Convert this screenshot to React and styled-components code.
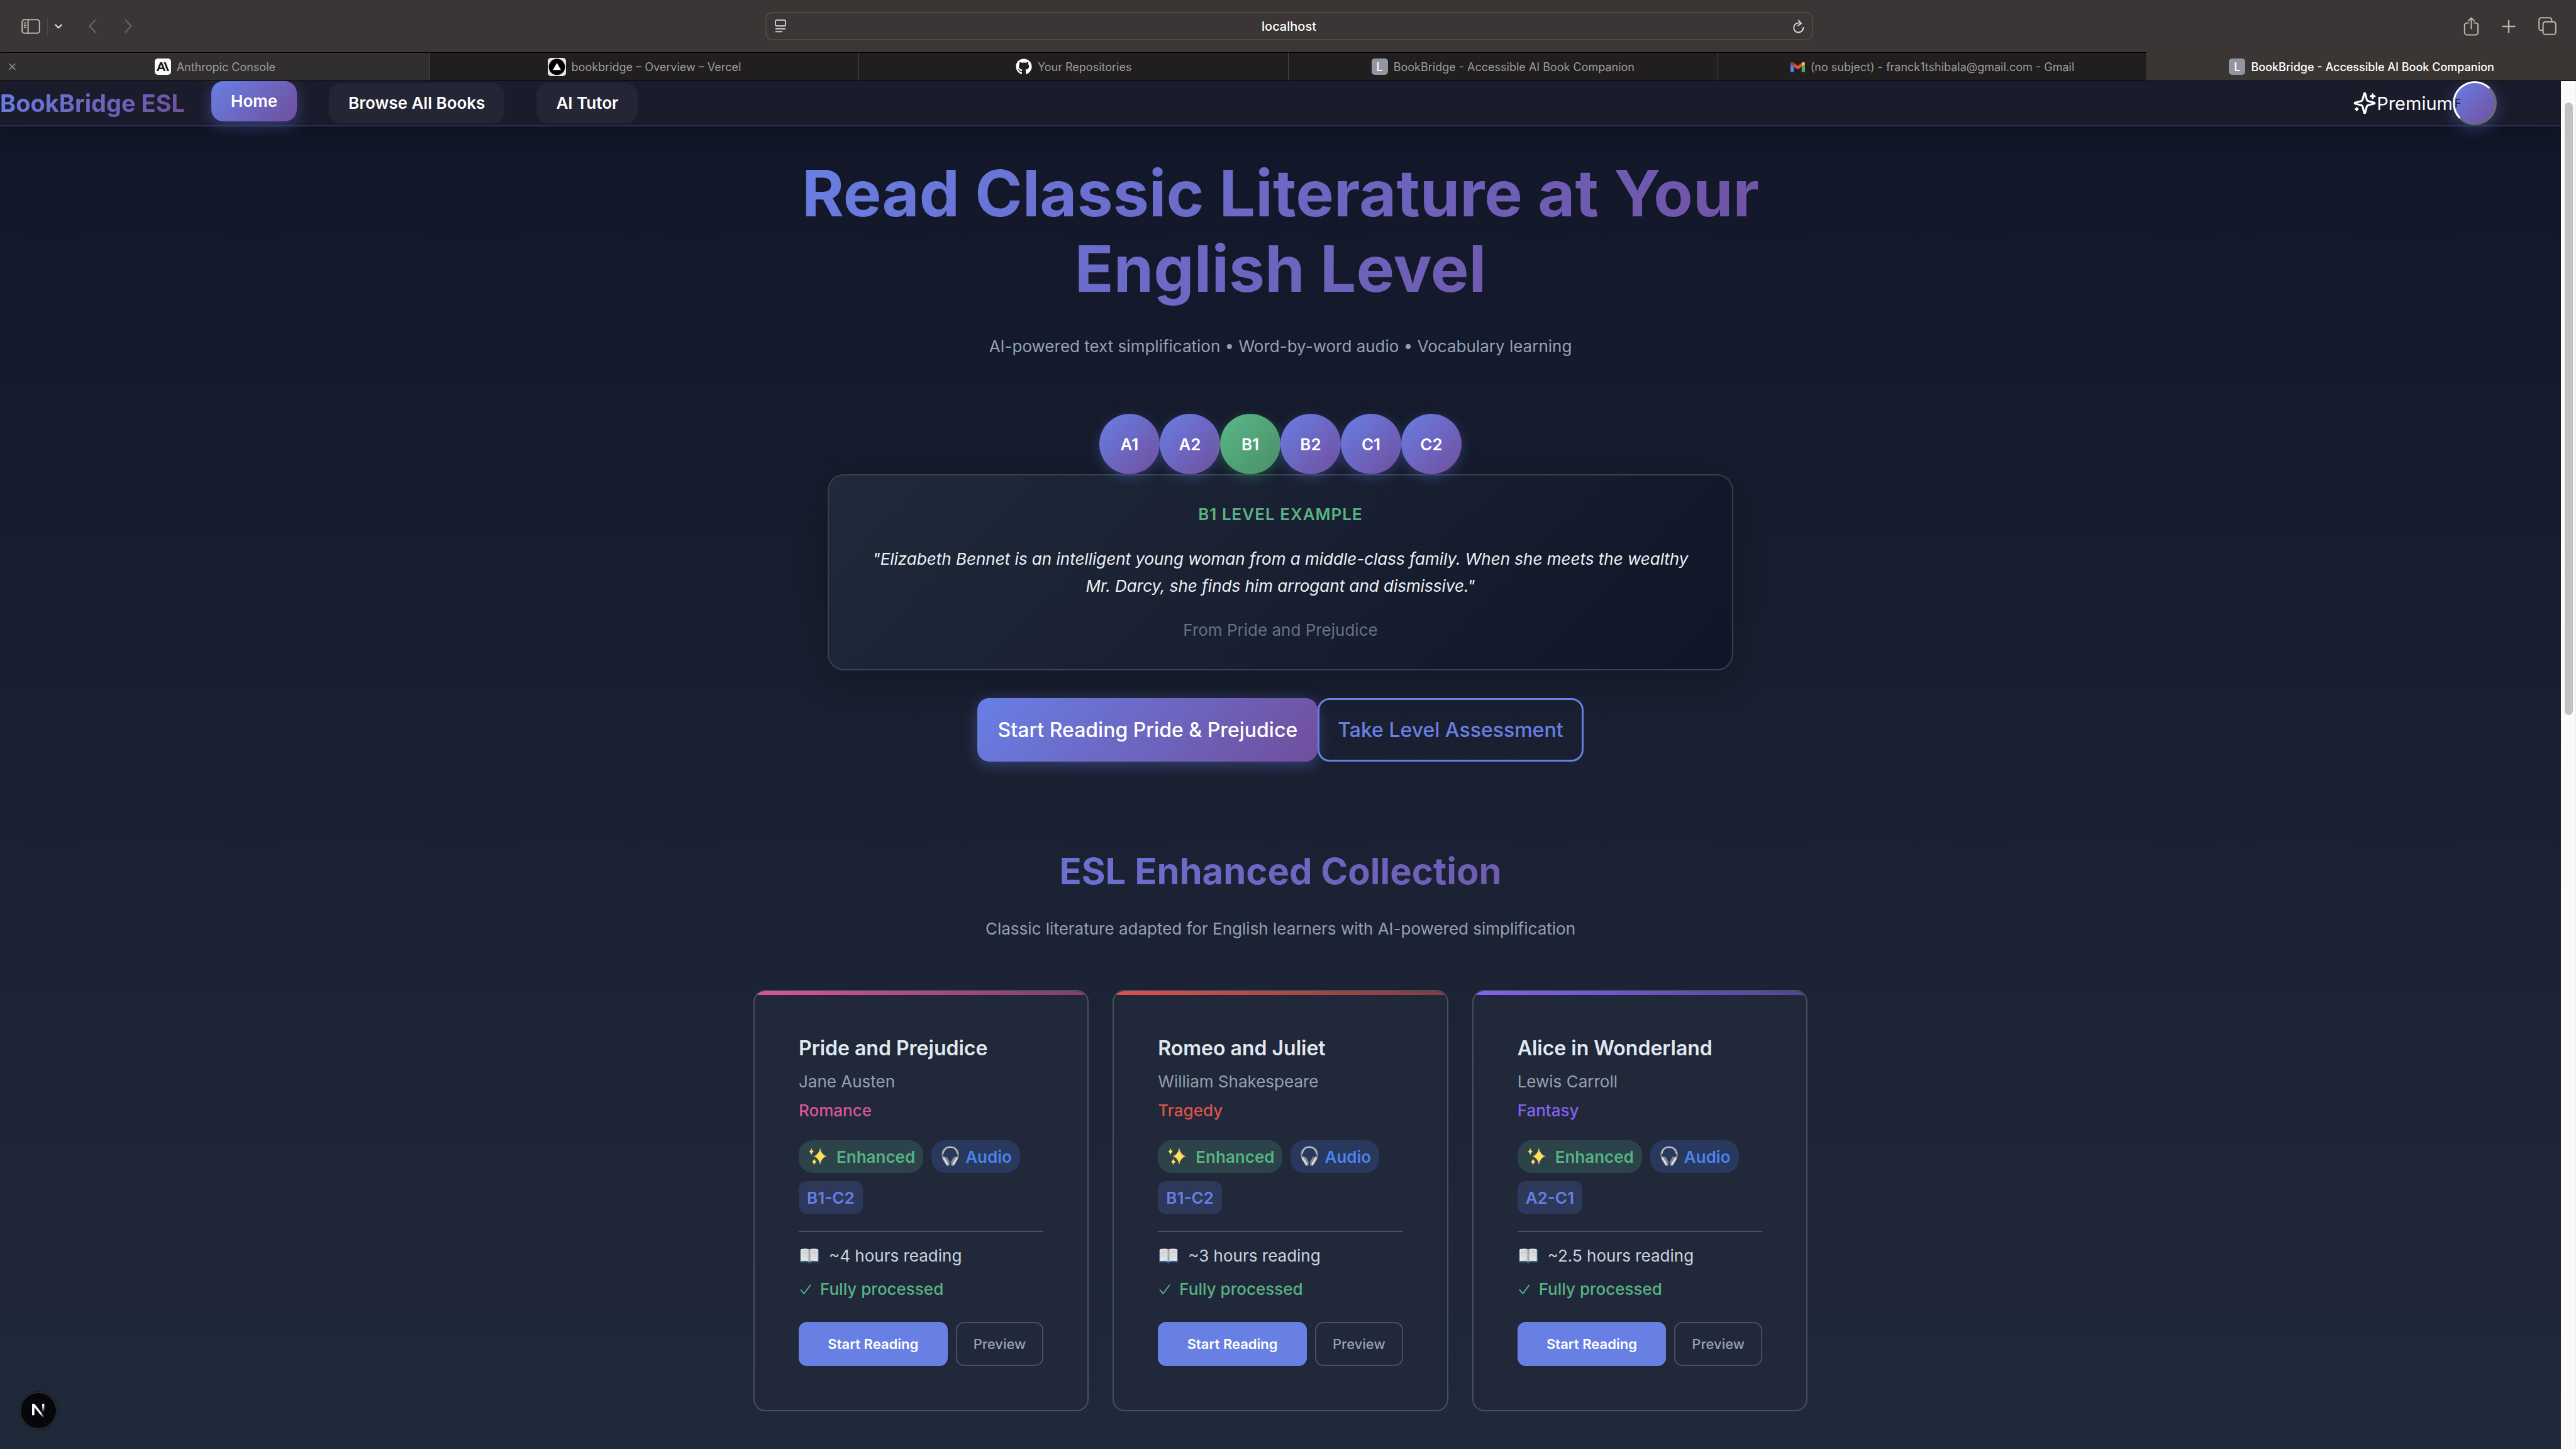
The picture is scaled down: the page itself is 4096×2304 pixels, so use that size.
import React, { useState } from 'react';
import styled, { createGlobalStyle, css } from 'styled-components';
import { FaGithub } from 'react-icons/fa';
import { SiAnthropic } from 'react-icons/si';

const brandGradient = 'linear-gradient(135deg, #687fe5 0%, #714e9d 100%)';

const GlobalStyle = createGlobalStyle`
  *, *::before, *::after { box-sizing: border-box; }
  body {
    margin: 0;
    font-family: Inter, 'Liberation Sans', sans-serif;
    font-size: 26px;
    color: #e2e8f0;
    background: #111628;
  }
  h1, h2, h3, p, ul { margin: 0; padding: 0; }
  ul { list-style: none; }
  button, input { font-family: inherit; margin: 0; }
  button { cursor: pointer; }
  svg { display: block; flex: none; }
`;

const gradientText = css`
  background: ${brandGradient};
  -webkit-background-clip: text;
  background-clip: text;
  color: transparent;
`;

/* ---------- Browser window ---------- */

const Window = styled.div`
  display: flex;
  flex-direction: column;
  height: 100vh;
  overflow: hidden;
`;

const Toolbar = styled.header`
  display: grid;
  grid-template-columns: 1fr 1666px 1fr;
  align-items: center;
  padding: 19px 31px 19px 34px;
  background: #3b3635;
`;

const ToolGroup = styled.div`
  display: flex;
  align-items: center;
  gap: ${(p) => p.$gap}px;
  justify-content: ${(p) => (p.$end ? 'flex-end' : 'flex-start')};
`;

const IconButton = styled.button`
  display: flex;
  padding: 0;
  border: 0;
  background: none;
  color: ${(p) => p.$color || '#b8b2b1'};
`;

const ToolDivider = styled.span`
  width: 1px;
  height: 28px;
  background: #4e4948;
`;

const AddressBar = styled.form`
  display: flex;
  align-items: center;
  height: 45px;
  padding: 0 11px 0 13px;
  border: 2px solid #4d4947;
  border-radius: 11px;
`;

const AddressInput = styled.input`
  flex: 1;
  min-width: 0;
  padding: 0;
  border: 0;
  outline: 0;
  background: none;
  color: #fff;
  font-size: 20px;
  font-weight: 500;
  text-align: center;
`;

const TabStrip = styled.nav`
  display: grid;
  grid-template-columns: repeat(6, minmax(0, 1fr));
  border-bottom: 1px solid #000;
  background: #3a3634;
`;

const Tab = styled.div`
  position: relative;
  border-top: 1px solid ${(p) => (p.$active ? 'transparent' : '#000')};
  border-left: 1px solid ${(p) => (p.$first ? 'transparent' : '#484647')};
  background: ${(p) => (p.$active ? 'transparent' : p.$hovered ? '#302e2f' : '#201e1f')};
`;

const TabButton = styled.button`
  display: flex;
  align-items: center;
  justify-content: center;
  gap: 9px;
  width: 100%;
  height: 44px;
  padding: 0;
  border: 0;
  background: none;
  font-size: 18px;
  font-weight: ${(p) => (p.$active ? 500 : 400)};
  color: ${(p) => (p.$active ? '#fff' : '#9d9a9b')};
  white-space: nowrap;
`;

const TabClose = styled.button`
  position: absolute;
  left: 13px;
  top: 50%;
  transform: translateY(-50%);
  display: flex;
  padding: 0;
  border: 0;
  background: none;
  color: #9d9a9b;
`;

const LetterIcon = styled.span`
  display: flex;
  align-items: center;
  justify-content: center;
  width: 26px;
  height: 26px;
  border-radius: 5px;
  background: #9495a2;
  color: #fff;
  font-size: 18px;
  font-weight: 500;
`;

const LogoTile = styled.span`
  display: flex;
  align-items: center;
  justify-content: center;
  width: 26px;
  height: 26px;
  border-radius: 5px;
  background: #fbfaf7;
  color: #1c1b19;
  font-size: 20px;
`;

const Viewport = styled.div`
  display: flex;
  flex: 1;
  min-height: 0;
`;

const ScrollTrack = styled.div`
  flex: none;
  width: 24px;
  padding: 34px 4px 0 6px;
  background: #fafafa;
  border-right: 1px solid #ececec;
`;

const ScrollThumb = styled.div`
  width: 13px;
  height: 45.5%;
  border-radius: 7px;
  background: #c2c2c2;
`;

/* ---------- Page ---------- */

const Page = styled.div`
  position: relative;
  flex: 1;
  min-width: 0;
  overflow: hidden;
  background: linear-gradient(180deg, #111628 0%, #1a2031 50%, #20293a 100%);
`;

const SiteNav = styled.nav`
  position: relative;
  display: flex;
  align-items: center;
  padding-right: 102px;
  border-bottom: 2px solid #2a2c50;
  background: #1a1b2b;
  box-shadow: 0 6px 48px rgba(0, 0, 0, 0.2);
`;

const Brand = styled.a`
  ${gradientText}
  font-size: 38px;
  line-height: 48px;
  font-weight: 700;
  text-decoration: none;
`;

const NavLinks = styled.ul`
  display: flex;
  gap: 51px;
  margin-left: 42px;
`;

const NavLink = styled.a`
  display: block;
  padding: 0 31px;
  border-radius: 19px;
  line-height: 64px;
  font-weight: 600;
  color: #fff;
  text-decoration: none;
  background: rgba(255, 255, 255, 0.05);
  ${(p) =>
    p.$active &&
    css`
      background: ${brandGradient};
      box-shadow: 0 6px 26px rgba(102, 126, 234, 0.4);
      transform: translateY(-3px);
    `}
`;

const Account = styled.div`
  display: flex;
  align-items: center;
  margin-left: auto;
  color: #fff;
  font-size: 29px;
`;

const Avatar = styled.button`
  width: 70px;
  height: 70px;
  padding: 0;
  border: 3px solid;
  border-color: #fff #6d6d6b #6d6d6b #fff;
  border-radius: 50%;
  background: ${brandGradient};
  background-origin: border-box;
  box-shadow: 0 6px 24px rgba(102, 126, 234, 0.35);
  color: #1a1b2b;
  font-size: 18px;
  text-align: left;
`;

const Hero = styled.section`
  display: flex;
  flex-direction: column;
  align-items: center;
  padding-top: 46px;
  text-align: center;
`;

const HeroTitle = styled.h1`
  ${gradientText}
  max-width: 1600px;
  font-size: 102px;
  line-height: 120px;
  font-weight: 700;
`;

const Lead = styled.p`
  margin-top: ${(p) => p.$top}px;
  line-height: 40px;
  color: #94a1b3;
`;

const Levels = styled.div`
  position: relative;
  display: flex;
  margin-top: 87px;
`;

const LevelButton = styled.button`
  width: 96px;
  height: 96px;
  padding: 0;
  border: 0;
  border-radius: 50%;
  background: ${(p) => (p.$selected ? 'linear-gradient(135deg, #59b887, #498f68)' : brandGradient)};
  box-shadow: 0 6px 20px ${(p) => (p.$selected ? 'rgba(72, 187, 120, 0.3)' : 'rgba(102, 126, 234, 0.3)')};
  color: #fff;
  font-size: 26px;
  font-weight: 600;
`;

const Example = styled.article`
  display: flex;
  flex-direction: column;
  gap: 27px;
  width: 100%;
  max-width: 1440px;
  padding: 40px 64px;
  border: 2px solid #374151;
  border-radius: 26px;
  background: linear-gradient(135deg, #202a3a 0%, #101527 100%);
  box-shadow: 0 16px 52px rgba(0, 0, 0, 0.25);
`;

const ExampleLabel = styled.h2`
  font-size: 26px;
  line-height: 44px;
  font-weight: 600;
  letter-spacing: 1px;
  text-transform: uppercase;
  color: #57b384;
`;

const Quote = styled.p`
  line-height: 43px;
  font-style: italic;
  color: #edf1f6;
`;

const Source = styled.p`
  line-height: 44px;
  color: #677285;
`;

const HeroActions = styled.div`
  display: flex;
  margin-top: 44px;
`;

const HeroButton = styled.button`
  height: 101px;
  padding: 0 ${(p) => (p.$outline ? 29 : 32)}px;
  border: ${(p) => (p.$outline ? '3px solid #6880e3' : '0')};
  border-radius: 19px;
  background: ${(p) => (p.$outline ? 'none' : brandGradient)};
  box-shadow: ${(p) => (p.$outline ? 'none' : '0 6px 24px rgba(102, 126, 234, 0.35)')};
  color: ${(p) => (p.$outline ? '#6880e3' : '#fff')};
  font-size: 32px;
  font-weight: 500;
`;

const Collection = styled.section`
  width: 100%;
  max-width: 1676px;
  margin: 139px auto 0;
  text-align: center;
`;

const SectionTitle = styled.h2`
  ${gradientText}
  font-size: 58px;
  line-height: 70px;
  font-weight: 700;
`;

const BookGrid = styled.ul`
  display: grid;
  grid-template-columns: repeat(3, 1fr);
  gap: 38px;
  margin-top: 77px;
  text-align: left;
`;

const BookCard = styled.li`
  position: relative;
  overflow: hidden;
  padding: 70px;
  border: 2px solid #465160;
  border-radius: 19px;
  background: #20283a;

  &::before {
    content: '';
    position: absolute;
    inset: 0 0 auto 0;
    height: 6px;
    background: linear-gradient(90deg, ${(p) => p.$from}, ${(p) => p.$to});
  }
`;

const BookTitle = styled.h3`
  font-size: 32px;
  line-height: 42px;
  font-weight: 600;
  color: #e2e8f0;
`;

const Author = styled.p`
  margin-top: 14px;
  line-height: 36px;
  color: #94a1b3;
`;

const Genre = styled.p`
  margin-top: 10px;
  line-height: 36px;
  font-weight: 500;
  color: ${(p) => p.$color};
`;

const Badges = styled.div`
  display: flex;
  flex-wrap: wrap;
  gap: 13px;
  margin: 29px 0 27px;
`;

const badgeTones = {
  green: css`background: #2b4349; color: #57b384; border-radius: 22px; gap: 13px;`,
  blue: css`background: #29395d; color: #4b83ee; border-radius: 22px; gap: 7px;`,
  indigo: css`background: #2e385b; color: #687fe3; border-radius: 13px;`,
};

const Badge = styled.span`
  display: flex;
  align-items: center;
  height: 52px;
  padding: 0 13px;
  font-weight: 600;
  ${(p) => badgeTones[p.$tone]}
`;

const Facts = styled.ul`
  display: flex;
  flex-direction: column;
  gap: 13px;
  padding-top: 18px;
  border-top: 2px solid #465160;
`;

const Fact = styled.li`
  display: flex;
  align-items: center;
  gap: 14px;
  line-height: 40px;
  color: ${(p) => (p.$done ? '#57b384' : '#cbd4df')};
  font-weight: ${(p) => (p.$done ? 500 : 400)};
`;

const CardActions = styled.div`
  display: flex;
  gap: 13px;
  margin-top: 32px;
`;

const CardButton = styled.button`
  flex: ${(p) => (p.$outline ? '0 0 auto' : '1')};
  height: 70px;
  padding: 0 26px;
  border: ${(p) => (p.$outline ? '2px solid #465160' : '0')};
  border-radius: 13px;
  background: ${(p) => (p.$outline ? 'none' : '#6880e3')};
  color: ${(p) => (p.$outline ? '#94a1b3' : '#fff')};
  font-size: 22px;
  font-weight: ${(p) => (p.$outline ? 500 : 600)};
`;

const DevBadge = styled.button`
  position: absolute;
  left: 31px;
  bottom: 31px;
  display: flex;
  align-items: center;
  justify-content: center;
  width: 60px;
  height: 60px;
  padding: 0;
  border: 2px solid #2b2c2e;
  border-radius: 50%;
  background: #05070b;
  box-shadow: 0 0 0 1px #17191c;
`;

/* ---------- Drawings ---------- */

const Stroke = ({ w, h, box, width = 3, children }) => (
  <svg width={w} height={h} viewBox={box} fill="none" stroke="currentColor" strokeWidth={width}
    strokeLinecap="round" strokeLinejoin="round" aria-hidden="true">{children}</svg>
);

const SidebarIcon = () => (
  <Stroke w={30} h={24} box="0 0 38 30" width={2.6}>
    <rect x="1.5" y="1.5" width="35" height="27" rx="5" />
    <path d="M13.5 2v26" />
    <path d="M6 8h3M6 12.500h3M6 17h3" width={2} />
  </Stroke>
);
const ChevronIcon = () => (
  <Stroke w={12} h={8} box="0 0 16 10" width={3}><path d="M2 2l6 6 6-6" /></Stroke>
);
const BackIcon = () => (
  <Stroke w={12} h={23} box="0 0 16 30" width={2.8}><path d="M14 2L2 15l12 13" /></Stroke>
);
const ForwardIcon = () => (
  <Stroke w={12} h={23} box="0 0 16 30" width={2.8}><path d="M2 2l12 13L2 28" /></Stroke>
);
const ReaderIcon = () => (
  <Stroke w={18} h={21} box="0 0 22 26" width={2.2}>
    <rect x="1.200" y="1.200" width="19.600" height="11.500" rx="2.500" />
    <path d="M2 18.500h18M2 24h12" />
  </Stroke>
);
const ReloadIcon = () => (
  <Stroke w={20} h={22} box="0 0 25 28" width={2.4}>
    <path d="M17 8.200A9.600 9.600 0 1 0 21.800 16" />
    <path d="M12.500 2l5 6.200-6.200 4.200" />
  </Stroke>
);
const ShareIcon = () => (
  <Stroke w={25} h={30} box="0 0 31 38" width={2.600}>
    <path d="M10 12H6.500A4.500 4.500 0 0 0 2 16.500v15A4.500 4.500 0 0 0 6.500 36h18a4.500 4.500 0 0 0 4.500-4.500v-15A4.500 4.500 0 0 0 24.500 12H21" />
    <path d="M15.500 23.500V2.200M9.500 8l6-6 6 6" />
  </Stroke>
);
const PlusIcon = () => (
  <Stroke w={22} h={22} box="0 0 28 28" width={3}><path d="M14 2v24M2 14h24" /></Stroke>
);
const TabsIcon = () => (
  <Stroke w={29} h={29} box="0 0 36 36" width={2.600}>
    <rect x="9.500" y="9.500" width="25" height="25" rx="4.500" />
    <path d="M9 26.500H6A4.500 4.500 0 0 1 1.500 22V6A4.500 4.500 0 0 1 6 1.500h16A4.500 4.500 0 0 1 26.500 6v3" />
  </Stroke>
);
const CloseIcon = () => (
  <Stroke w={11} h={11} box="0 0 14 14" width={1.800}><path d="M1.500 1.500l11 11M12.500 1.500l-11 11" /></Stroke>
);
const VercelIcon = () => (
  <svg width="29" height="29" viewBox="0 0 36 36" aria-hidden="true">
    <rect width="36" height="36" rx="6" fill="#e2e2e2" />
    <circle cx="18" cy="18" r="16" fill="#000" />
    <path d="M18 10l8 14H10z" fill="#fff" />
  </svg>
);
const GmailIcon = () => (
  <svg width="23" height="18" viewBox="0 0 29 22" aria-hidden="true">
    <path d="M0 4v16a2 2 0 0 0 2 2h4.700V9z" fill="#5383ec" />
    <path d="M29 4v16a2 2 0 0 1-2 2h-4.700V9z" fill="#58a65c" />
    <path d="M6.700 3.500l7.800 5.900 7.800-5.900V11l-7.800 5.900L6.700 11z" fill="#d95140" />
    <path d="M22.300 3.500l1.700-1.400C26.200.5 29 2 29 4.600V6l-6.700 5z" fill="#f2bd42" />
    <path d="M6.700 3.500L5 2.100C2.800.5 0 2 0 4.600V6l6.700 5z" fill="#b5382f" />
  </svg>
);
const SparklesLine = () => (
  <svg width="38" height="38" viewBox="0 0 24 24" fill="none" stroke="currentColor" strokeWidth="2"
    strokeLinecap="round" strokeLinejoin="round" aria-hidden="true">
    <path d="M9.937 15.5A2 2 0 0 0 8.5 14.063l-6.135-1.582a.5.5 0 0 1 0-.962L8.5 9.936A2 2 0 0 0 9.937 8.5l1.582-6.135a.5.5 0 0 1 .963 0L14.063 8.5A2 2 0 0 0 15.5 9.937l6.135 1.581a.5.5 0 0 1 0 .964L15.5 14.063a2 2 0 0 0-1.437 1.437l-1.582 6.135a.5.5 0 0 1-.963 0z" />
    <path d="M20 3v4M22 5h-4M4 17v2M5 18H3" />
  </svg>
);
const star = (x, y, rx, ry) => {
  const a = rx * 0.15;
  const b = ry * 0.15;
  return `M${x} ${y - ry}Q${x + a} ${y - b} ${x + rx} ${y}Q${x + a} ${y + b} ${x} ${y + ry}Q${x - a} ${y + b} ${x - rx} ${y}Q${x - a} ${y - b} ${x} ${y - ry}Z`;
};
const SparklesEmoji = () => (
  <svg width="34" height="34" viewBox="0 0 128 128" aria-hidden="true">
    <defs>
      <radialGradient id="glint">
        <stop offset="0" stopColor="#ffe35c" />
        <stop offset="0.450" stopColor="#fbdc5e" />
        <stop offset="1" stopColor="#c99a5a" />
      </radialGradient>
    </defs>
    <g fill="url(#glint)">
      <path d={star(79, 62, 41, 53)} />
      <path d={star(27, 34, 16, 25)} />
      <path d={star(44, 95, 17, 23)} />
    </g>
  </svg>
);
const HeadphonesEmoji = () => (
  <svg width="34" height="34" viewBox="0 0 42 42" fill="none" strokeLinecap="round" aria-hidden="true">
    <path d="M6.500 24C2.500 10 10 2 21 2s18.500 8 14.500 22" stroke="#8b8b8d" strokeWidth="2.800" />
    <path d="M6.800 15C9 6 14 2.600 21 2.600S33 6 35.200 15" stroke="#c9c9ca" strokeWidth="2.200" />
    <path d="M9 24.500l7 11.500" stroke="#8f8f92" strokeWidth="7" />
    <path d="M33 24.500L26 36" stroke="#8f8f92" strokeWidth="7" />
    <path d="M8.300 24.500l6.500 11" stroke="#dededf" strokeWidth="3.600" />
    <path d="M33.700 24.500l-6.500 11" stroke="#dededf" strokeWidth="3.600" />
    <path d="M13.500 22.500l5.500 10M28.500 22.500L23 32.500" stroke="#a9a9ab" strokeWidth="1.600" />
  </svg>
);
const BookEmoji = () => (
  <svg width="34" height="26" viewBox="0 0 128 98" aria-hidden="true">
    <path d="M8 12h112v76H72l-4 5h-8l-4-5H8z" fill="#3f7597" />
    <path d="M8 82h112v6H72l-4 5h-8l-4-5H8z" fill="#2b5372" />
    <path d="M13 8c18-4 38-4 51 3 13-7 33-7 51-3v72c-20-3-38-3-51 4-13-7-31-7-51-4z" fill="#e9e8ea" />
    <path d="M64 11c-4-3-8-4-11-5v71c4 1 8 3 11 6 3-3 7-5 11-6V6c-3 1-7 2-11 5z" fill="#c4c3c6" />
    <path d="M64 11v73" stroke="#77777c" strokeWidth="3" />
    <path d="M20 19q16-3 30-1M20 28q16-3 30-1M20 37q16-3 30-1M20 46q16-3 30-1M20 55q16-3 30-1M20 64q16-3 30-1M78 18q14-2 30 1M78 27q14-2 30 1M78 36q14-2 30 1M78 45q14-2 30 1M78 54q14-2 30 1M78 63q14-2 30 1"
      stroke="#b2b1b5" strokeWidth="3" fill="none" />
  </svg>
);
const CheckIcon = () => (
  <Stroke w={20} h={20} box="0 0 20 20" width={2}><path d="M3.500 11l4.800 6L18.500 3.500" /></Stroke>
);
const NextMark = () => (
  <svg width="20" height="23" viewBox="0 0 75 84" aria-hidden="true">
    <defs>
      <linearGradient id="nextStem" x1="0" y1="0" x2="0" y2="1">
        <stop offset="0.200" stopColor="#fff" />
        <stop offset="1" stopColor="#fff" stopOpacity="0" />
      </linearGradient>
      <linearGradient id="nextDiagonal" x1="0" y1="0" x2="0.900" y2="1">
        <stop offset="0.700" stopColor="#fff" />
        <stop offset="1" stopColor="#fff" stopOpacity="0" />
      </linearGradient>
    </defs>
    <path d="M0 0h15l60 78-9 6L14 20v47H0z" fill="url(#nextDiagonal)" />
    <path d="M60 0h13v50H60z" fill="url(#nextStem)" />
  </svg>
);

/* ---------- Data ---------- */

const tabs = [
  { title: 'Anthropic Console', icon: <LogoTile><SiAnthropic /></LogoTile>, hovered: true },
  { title: 'bookbridge – Overview – Vercel', icon: <VercelIcon /> },
  { title: 'Your Repositories', icon: <FaGithub size={26} color="#fff" /> },
  { title: 'BookBridge - Accessible AI Book Companion', icon: <LetterIcon>L</LetterIcon> },
  { title: '(no subject) - franck1tshibala@gmail.com - Gmail', icon: <GmailIcon /> },
  { title: 'BookBridge - Accessible AI Book Companion', icon: <LetterIcon>L</LetterIcon>, active: true },
];

const levels = ['A1', 'A2', 'B1', 'B2', 'C1', 'C2'];

const books = [
  { title: 'Pride and Prejudice', author: 'Jane Austen', genre: 'Romance', range: 'B1-C2', time: '~4 hours reading', color: '#da5597', fade: '#7e406a' },
  { title: 'Romeo and Juliet', author: 'William Shakespeare', genre: 'Tragedy', range: 'B1-C2', time: '~3 hours reading', color: '#dd524c', fade: '#7e3e44' },
  { title: 'Alice in Wonderland', author: 'Lewis Carroll', genre: 'Fantasy', range: 'A2-C1', time: '~2.5 hours reading', color: '#8562ee', fade: '#534594' },
];

const Book = ({ book }) => (
  <BookCard $from={book.color} $to={book.fade}>
    <BookTitle>{book.title}</BookTitle>
    <Author>{book.author}</Author>
    <Genre $color={book.color}>{book.genre}</Genre>
    <Badges>
      <Badge $tone="green"><SparklesEmoji />Enhanced</Badge>
      <Badge $tone="blue"><HeadphonesEmoji />Audio</Badge>
      <Badge $tone="indigo">{book.range}</Badge>
    </Badges>
    <Facts>
      <Fact><BookEmoji />{book.time}</Fact>
      <Fact $done><CheckIcon />Fully processed</Fact>
    </Facts>
    <CardActions>
      <CardButton type="button">Start Reading</CardButton>
      <CardButton type="button" $outline>Preview</CardButton>
    </CardActions>
  </BookCard>
);

export default function App() {
  const [level, setLevel] = useState('B1');
  const [address, setAddress] = useState('localhost');

  return (
    <>
      <GlobalStyle />
      <Window>
        <Toolbar>
          <ToolGroup $gap={42}>
            <ToolGroup $gap={11}>
              <IconButton type="button" aria-label="Show sidebar"><SidebarIcon /></IconButton>
              <ToolDivider />
              <IconButton type="button" aria-label="Tab groups" $color="#e6e2e1"><ChevronIcon /></IconButton>
            </ToolGroup>
            <ToolGroup $gap={45}>
              <IconButton type="button" aria-label="Back" $color="#6b6665"><BackIcon /></IconButton>
              <IconButton type="button" aria-label="Forward" $color="#6b6665"><ForwardIcon /></IconButton>
            </ToolGroup>
          </ToolGroup>
          <AddressBar onSubmit={(e) => e.preventDefault()}>
            <IconButton type="button" aria-label="Page menu" $color="#dcd9d8"><ReaderIcon /></IconButton>
            <AddressInput aria-label="Address" value={address} onChange={(e) => setAddress(e.target.value)} />
            <IconButton type="button" aria-label="Reload" $color="#dcd9d8"><ReloadIcon /></IconButton>
          </AddressBar>
          <ToolGroup $gap={36} $end>
            <IconButton type="button" aria-label="Share"><ShareIcon /></IconButton>
            <IconButton type="button" aria-label="New tab"><PlusIcon /></IconButton>
            <IconButton type="button" aria-label="Tab overview"><TabsIcon /></IconButton>
          </ToolGroup>
        </Toolbar>
        <TabStrip aria-label="Tabs">
          {tabs.map((tab, i) => (
            <Tab key={i} $active={tab.active} $hovered={tab.hovered} $first={i === 0}>
              <TabButton type="button" $active={tab.active}>{tab.icon}<span>{tab.title}</span></TabButton>
              {tab.hovered && <TabClose type="button" aria-label="Close tab"><CloseIcon /></TabClose>}
            </Tab>
          ))}
        </TabStrip>
        <Viewport>
          <Page>
            <SiteNav aria-label="Main">
              <Brand href="#home">BookBridge ESL</Brand>
              <NavLinks>
                <li><NavLink href="#home" $active>Home</NavLink></li>
                <li><NavLink href="#books">Browse All Books</NavLink></li>
                <li><NavLink href="#tutor">AI Tutor</NavLink></li>
              </NavLinks>
              <Account>
                <SparklesLine />
                <span>Premium</span>
                <Avatar type="button" aria-label="Account menu">F</Avatar>
              </Account>
            </SiteNav>
            <main>
              <Hero>
                <HeroTitle>Read Classic Literature at Your English Level</HeroTitle>
                <Lead $top={44}>AI-powered text simplification • Word-by-word audio • Vocabulary learning</Lead>
                <Levels role="group" aria-label="English level">
                  {levels.map((l) => (
                    <LevelButton key={l} type="button" aria-pressed={l === level} $selected={l === level} onClick={() => setLevel(l)}>{l}</LevelButton>
                  ))}
                </Levels>
                <Example>
                  <ExampleLabel>{level} Level Example</ExampleLabel>
                  <Quote>"Elizabeth Bennet is an intelligent young woman from a middle-class family. When she meets the wealthy Mr. Darcy, she finds him arrogant and dismissive."</Quote>
                  <Source>From Pride and Prejudice</Source>
                </Example>
                <HeroActions>
                  <HeroButton type="button">Start Reading Pride &amp; Prejudice</HeroButton>
                  <HeroButton type="button" $outline>Take Level Assessment</HeroButton>
                </HeroActions>
              </Hero>
              <Collection id="books">
                <SectionTitle>ESL Enhanced Collection</SectionTitle>
                <Lead $top={37}>Classic literature adapted for English learners with AI-powered simplification</Lead>
                <BookGrid>
                  {books.map((book) => <Book key={book.title} book={book} />)}
                </BookGrid>
              </Collection>
            </main>
            <DevBadge type="button" aria-label="Open Next.js Dev Tools"><NextMark /></DevBadge>
          </Page>
          <ScrollTrack aria-hidden="true"><ScrollThumb /></ScrollTrack>
        </Viewport>
      </Window>
    </>
  );
}
